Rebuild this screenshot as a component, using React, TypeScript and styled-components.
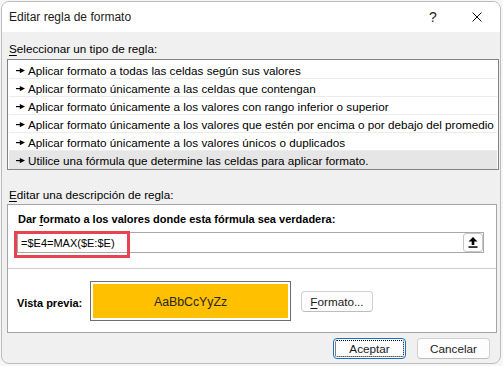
import React from 'react'
import styled, { createGlobalStyle } from 'styled-components'

const Global = createGlobalStyle`
  html, body { margin:0; padding:0; background:#f6f6f6; }
  body { width:503px; height:366px; overflow:hidden; font-family:"Liberation Sans", Arial, sans-serif; font-size:11.7px; color:#000; }
  #root { padding:1px; }
`

const Win = styled.div`
  width:500px;
  height:363px;
  box-sizing:border-box;
  border:1px solid #bcbcbc;
  border-radius:8px;
  overflow:hidden;
  background:#f0f0f0;
  display:flex;
  flex-direction:column;
`

const TitleBar = styled.div`
  height:30px;
  background:#fff;
  display:flex;
  align-items:center;
  padding-left:7px;
  flex-shrink:0;
  font-size:12px;
  .title{ flex:1; color:#1b1b1b; }
  .help{ width:20px; text-align:center; font-size:14px; margin-right:29px; color:#222; }
  .close{ width:10px; height:10px; margin-right:18px; display:flex; }
`

const Body = styled.div`
  padding-left:5px;
  display:flex;
  flex-direction:column;
`

const Label = styled.div<{ $top: number }>`
  margin-top:${p => p.$top}px;
  padding-left:2px;
  height:15px;
  line-height:15px;
  u{ text-decoration:underline; text-underline-offset:2px; }
`

const List = styled.div`
  margin-top:3px;
  width:492px;
  height:111px;
  box-sizing:border-box;
  border:1px solid #828282;
  background:#fff;
  padding:1px 1px 0 1px;
`

const Row = styled.div<{ $sel?: boolean }>`
  height:18px;
  box-sizing:border-box;
  border-bottom:1px solid ${p => p.$sel ? '#e6e6e6' : '#ececec'};
  background:${p => p.$sel ? '#e6e6e6' : '#fff'};
  display:flex;
  align-items:center;
  padding:1px 0 0 7px;
  white-space:nowrap;
  svg{ margin-right:3px; flex-shrink:0; }
`

const Panel = styled.div`
  margin-top:2px;
  width:490px;
  height:129px;
  box-sizing:border-box;
  border:1px solid #a5a5a5;
  background:#fff;
  display:flex;
  flex-direction:column;
`

const Top = styled.div`
  padding:7px 0 0 9px;
  height:64px;
  box-sizing:border-box;
  border-bottom:1px solid #cfcfcf;
  .bold{ font-weight:bold; font-size:11px; height:15px; line-height:15px; padding-left:1px; }
  u{ text-underline-offset:2px; }
`

const Field = styled.div`
  position:relative;
  margin-top:5px;
  width:467px;
  height:21px;
  box-sizing:border-box;
  border:1px solid #a8a8a8;
  display:flex;
  align-items:center;
  padding-left:3px;
  .formula{ flex:1; padding-top:1px; font-size:11px; }
`

const Highlight = styled.div`
  position:absolute;
  left:-4px;
  top:-2px;
  width:116px;
  height:27px;
  box-sizing:border-box;
  border:3px solid #e8434f;
  pointer-events:none;
`

const IconBtn = styled.div`
  width:20px;
  height:19px;
  box-sizing:border-box;
  border:1px solid #c6c6c6;
  border-radius:3px;
  background:#fdfdfd;
  display:flex;
  align-items:center;
  justify-content:center;
`

const Bottom = styled.div`
  flex:1;
  display:flex;
  align-items:center;
  padding:1px 0 0 9px;
  .lbl{ width:73px; font-weight:bold; font-size:11px; padding-top:3px; }
`

const Preview = styled.div`
  width:201px;
  height:40px;
  box-sizing:border-box;
  border:1px solid #6e6e6e;
  padding:2px;
  background:#fff;
  div{
    height:100%;
    background:#ffc000;
    display:flex;
    align-items:center;
    justify-content:center;
    font-size:12.3px;
    color:#262626;
    padding-top:1px;
    box-sizing:border-box;
  }
`

const Button = styled.div<{ $w: number; $focus?: boolean }>`
  width:${p => p.$w}px;
  height:21px;
  box-sizing:border-box;
  border:1px solid ${p => p.$focus ? '#1a6fc4' : '#d0d0d0'};
  border-bottom-color:${p => p.$focus ? '#1a6fc4' : '#bdbdbd'};
  border-radius:4px;
  background:#fdfdfd;
  display:flex;
  align-items:center;
  justify-content:center;
  color:#1a1a1a;
  outline:${p => p.$focus ? '1px dotted #000' : 'none'};
  outline-offset:-3px;
  u{ text-underline-offset:2px; }
`

const Footer = styled.div`
  display:flex;
  justify-content:flex-end;
  gap:11px;
  margin-top:5px;
  padding-right:10px;
`

const Arrow = () => (
  <svg width="9" height="7" viewBox="0 0 9 7">
    <rect x="0" y="3" width="5" height="1.2" fill="#000" />
    <polygon points="3.8,1 9,3.6 3.8,6.2" fill="#000" />
  </svg>
)

const rules = [
  'Aplicar formato a todas las celdas según sus valores',
  'Aplicar formato únicamente a las celdas que contengan',
  'Aplicar formato únicamente a los valores con rango inferior o superior',
  'Aplicar formato únicamente a los valores que estén por encima o por debajo del promedio',
  'Aplicar formato únicamente a los valores únicos o duplicados',
  'Utilice una fórmula que determine las celdas para aplicar formato.',
]

export default function App() {
  return (
    <>
      <Global />
      <Win>
        <TitleBar>
          <span className="title">Editar regla de formato</span>
          <span className="help">?</span>
          <svg className="close" viewBox="0 0 10 10">
            <path d="M0.5 0.5 L9.5 9.5 M9.5 0.5 L0.5 9.5" stroke="#111" strokeWidth="1" />
          </svg>
        </TitleBar>
        <Body>
          <Label $top={9}><u>S</u>eleccionar un tipo de regla:</Label>
          <List>
            {rules.map((r, i) => (
              <Row key={i} $sel={i === rules.length - 1}>
                <Arrow />
                {r}
              </Row>
            ))}
          </List>
          <Label $top={17}><u>E</u>ditar una descripción de regla:</Label>
          <Panel>
            <Top>
              <div className="bold">Dar <u>f</u>ormato a los valores donde esta fórmula sea verdadera:</div>
              <Field>
                <span className="formula">=$E4=MAX($E:$E)</span>
                <IconBtn>
                  <svg width="10" height="11" viewBox="0 0 10 11">
                    <polygon points="5,0 9.5,4.5 6.3,4.5 6.3,8 3.7,8 3.7,4.5 0.5,4.5" fill="#000" />
                    <rect x="0.5" y="9.3" width="9" height="1.5" fill="#000" />
                  </svg>
                </IconBtn>
                <Highlight />
              </Field>
            </Top>
            <Bottom>
              <span className="lbl">Vista previa:</span>
              <Preview><div>AaBbCcYyZz</div></Preview>
              <Button $w={72} style={{ marginLeft: 10 }}><span><u>F</u>ormato...</span></Button>
            </Bottom>
          </Panel>
          <Footer>
            <Button $w={73} $focus>Aceptar</Button>
            <Button $w={73}>Cancelar</Button>
          </Footer>
        </Body>
      </Win>
    </>
  )
}
